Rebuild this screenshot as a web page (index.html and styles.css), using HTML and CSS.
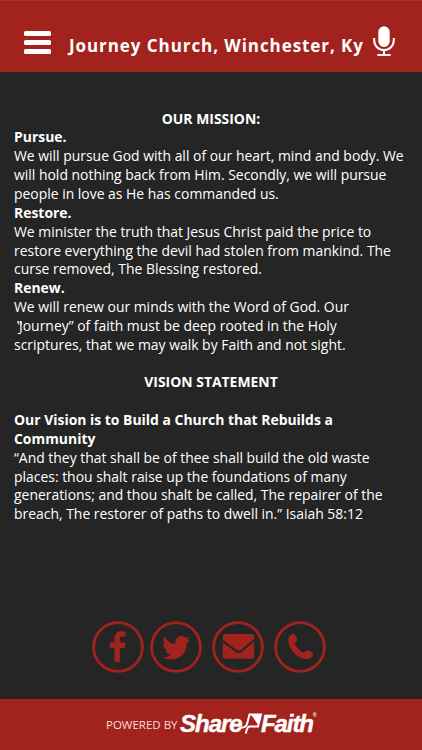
FILE: index.html
```html
<!DOCTYPE html>
<html lang="en">
<head>
    <meta charset="UTF-8">
    <meta name="viewport" content="width=device-width, initial-scale=1.0">
    <title>Journey Church, Winchester, Ky</title>
    <link rel="stylesheet" href="styles.css">
</head>
<body>
    <header class="header">
        <button class="menu-button" aria-label="Menu">
            <span></span>
            <span></span>
            <span></span>
        </button>
        <h1 class="title">Journey Church, Winchester, Ky</h1>
        <button class="mic-button" aria-label="Sermons">
            <svg width="22" height="31" viewBox="0 0 22 31">
                <rect x="5.3" y="0.3" width="11.4" height="20.7" rx="5.7" fill="#fff"/>
                <path d="M1.2 12v2.3a9.8 9.8 0 0 0 19.6 0V12M11 24v5" fill="none" stroke="#fff" stroke-width="2"/>
                <path d="M5.2 29h11.6" stroke="#fff" stroke-width="2.2" stroke-linecap="round"/>
            </svg>
        </button>
    </header>

    <main class="content">
        <h2>OUR MISSION:</h2>
        <h3>Pursue.</h3>
        <p>We will pursue God with all of our heart, mind and body. We<br>will hold nothing back from Him. Secondly, we will pursue<br>people in love as He has commanded us.</p>
        <h3>Restore.</h3>
        <p>We minister the truth that Jesus Christ paid the price to<br>restore everything the devil had stolen from mankind. The<br>curse removed, The Blessing restored.</p>
        <h3>Renew.</h3>
        <p>We will renew our minds with the Word of God. Our<br><span class="open-quote">‟</span>Journey” of faith must be deep rooted in the Holy<br>scriptures, that we may walk by Faith and not sight.</p>
        <h2 class="vision">VISION STATEMENT</h2>
        <h3>Our Vision is to Build a Church that Rebuilds a<br>Community</h3>
        <p>“And they that shall be of thee shall build the old waste<br>places: thou shalt raise up the foundations of many<br>generations; and thou shalt be called, The repairer of the<br>breach, The restorer of paths to dwell in.” Isaiah 58:12</p>
    </main>

    <nav class="social">
        <a class="facebook" href="#" aria-label="Facebook">
            <svg width="52" height="52" viewBox="0 0 52 52">
                <circle cx="26" cy="26" r="24.4"/>
                <path d="M22.5 41V26.9h-4.6v-5.3h4.6v-4.1c0-4.8 2.5-7.3 7.2-7.3 1.5 0 2.7.1 3.9.4v5h-2.9c-2 0-2.8.8-2.8 2.5v3.5h5.5l-.7 5.3h-4.8V41z"/>
            </svg>
        </a>
        <a class="twitter" href="#" aria-label="Twitter">
            <svg width="52" height="52" viewBox="0 0 52 52">
                <circle cx="26" cy="26" r="24.4"/>
                <path d="M39.8 15.6l-4.300 1.300c-3.200-3.700-10-1.700-10.100 4.200-.1 1-.1 1.500 0 2.200-4.600-.5-8.400-3.100-11.100-7.600-1.500 3-.9 5.900 1.200 7.900l-2.500-.7c.2 3.300 1.900 5.200 4.800 6.300l-2.400.2c1 2.400 2.900 3.800 5.600 4.100-2.200 2.100-4.900 3-8.400 3C22.400 41.100 36.600 37.500 36.900 22l2.900-3.300-2.700.6z"/>
            </svg>
        </a>
        <a class="email" href="#" aria-label="Email">
            <svg width="52" height="52" viewBox="0 0 52 52">
                <circle cx="26" cy="26" r="24.4"/>
                <path d="M10.8 17v-1.200a2.800 2.800 0 0 1 2.800-2.800h25.800a2.800 2.800 0 0 1 2.800 2.800V18L28.600 29q-2 1.400-4 0L10.800 18.800z"/>
                <path d="M10.800 21.500l12.900 9.500q2.900 2 5.800 0l12.700-10.200v14.600a2.400 2.400 0 0 1-2.400 2.400H13.200a2.400 2.400 0 0 1-2.400-2.400z"/>
            </svg>
        </a>
        <a class="phone" href="#" aria-label="Phone">
            <svg width="52" height="52" viewBox="0 0 52 52">
                <circle cx="26" cy="26" r="24.4"/>
                <path d="M15.500 15.300c1.200-1.400 2.500-2.100 4-2.300.8-.1 1.400.2 1.700.9l1.900 4.200c.4.8.2 1.500-.4 2.100l-2.200 2.200c1.800 4.100 5 7.300 9.100 9.300l2.700-2c.6-.5 1.300-.6 2-.2l4.100 2.200c.8.4 1.100 1.100.8 2-.8 2.500-3.500 4.300-6.500 4.300C23.800 38 14.300 28.500 14.300 19.300c0-1.500.3-3 1.200-4z"/>
            </svg>
        </a>
    </nav>

    <footer class="footer">
        <span class="powered">POWERED BY</span>
        <span class="brand">
            <span class="share">Share</span>
            <svg class="flag" width="24" height="23" viewBox="0 0 24 23">
                <path d="M0 15.500q6.500 1 8-3.500L10.500 2.500H22l-3 12H10.300Q8 15 6.800 21.500" fill="none" stroke="#fff" stroke-width="2"/>
                <path d="M12 2.500h10l-2.800 10.500z" fill="#fff"/>
            </svg>
            <span class="faith">Faith</span>
            <span class="mark">®</span>
        </span>
    </footer>
</body>
</html>
```

FILE: styles.css
```css
* {
    box-sizing: border-box;
}
body {
    margin: 0;
    height: 750px;
    display: flex;
    flex-direction: column;
    overflow: hidden;
    background-color: #252525;
    color: #fff;
    font-family: "Open Sans", "Noto Sans", sans-serif;
}
.header {
    display: flex;
    align-items: flex-start;
    height: 72px;
    padding-left: 24px;
    background-color: #a2231d;
    border-top: 1px solid #a83530;
}
.header button {
    padding: 0;
    border: none;
    background: none;
    cursor: pointer;
}
.menu-button {
    display: flex;
    flex-direction: column;
    gap: 4px;
    width: 27px;
    margin-top: 30px;
}
.menu-button span {
    height: 5px;
    width: 100%;
    border-radius: 1.5px;
    background-color: #fff;
}
.title {
    width: 304px;
    margin: 32px 0 0 18px;
    font-size: 17px;
    line-height: 26px;
    letter-spacing: 0.93px;
    white-space: nowrap;
}
.mic-button {
    margin-top: 25px;
}
.mic-button svg {
    display: block;
}
.content {
    flex: 1;
    padding: 37.6px 0 0 14px;
    font-size: 13.93px;
    line-height: 18.84px;
    white-space: nowrap;
}
.content h2,
.content h3,
.content p {
    margin: 0;
    font-size: inherit;
}
.content h2 {
    margin-right: 14px;
    text-align: center;
}
.content .vision {
    margin-top: 18.84px;
    margin-bottom: 18.84px;
}
.open-quote {
    margin-left: 3px;
    letter-spacing: -3px;
}
.social {
    display: flex;
    height: 78px;
    padding-left: 92px;
}
.facebook {
    margin-right: 6px;
}
.twitter,
.email {
    margin-right: 10px;
}
.social svg {
    display: block;
    fill: #a2231d;
}
.social circle {
    fill: none;
    stroke: #a2231d;
    stroke-width: 2.8;
}
.footer {
    display: flex;
    height: 51px;
    padding-left: 106px;
    background-color: #a2231d;
}
.powered {
    width: 74px;
    padding-top: 16px;
    font-size: 11.5px;
    line-height: 20px;
    color: #f8dedc;
    white-space: nowrap;
}
.brand {
    display: flex;
    align-items: flex-start;
    padding-top: 11px;
    font-family: "Liberation Sans", Arial, sans-serif;
    font-size: 24px;
    font-weight: bold;
    font-style: italic;
    line-height: 28px;
    letter-spacing: -1px;
    -webkit-text-stroke: 0.4px #fff;
}
.share {
    width: 61px;
}
.flag {
    margin: 2px -2px 0 -2px;
}
.faith {
    letter-spacing: -1.1px;
}
.mark {
    font-size: 5px;
    line-height: 10px;
    -webkit-text-stroke: 0;
}
```
